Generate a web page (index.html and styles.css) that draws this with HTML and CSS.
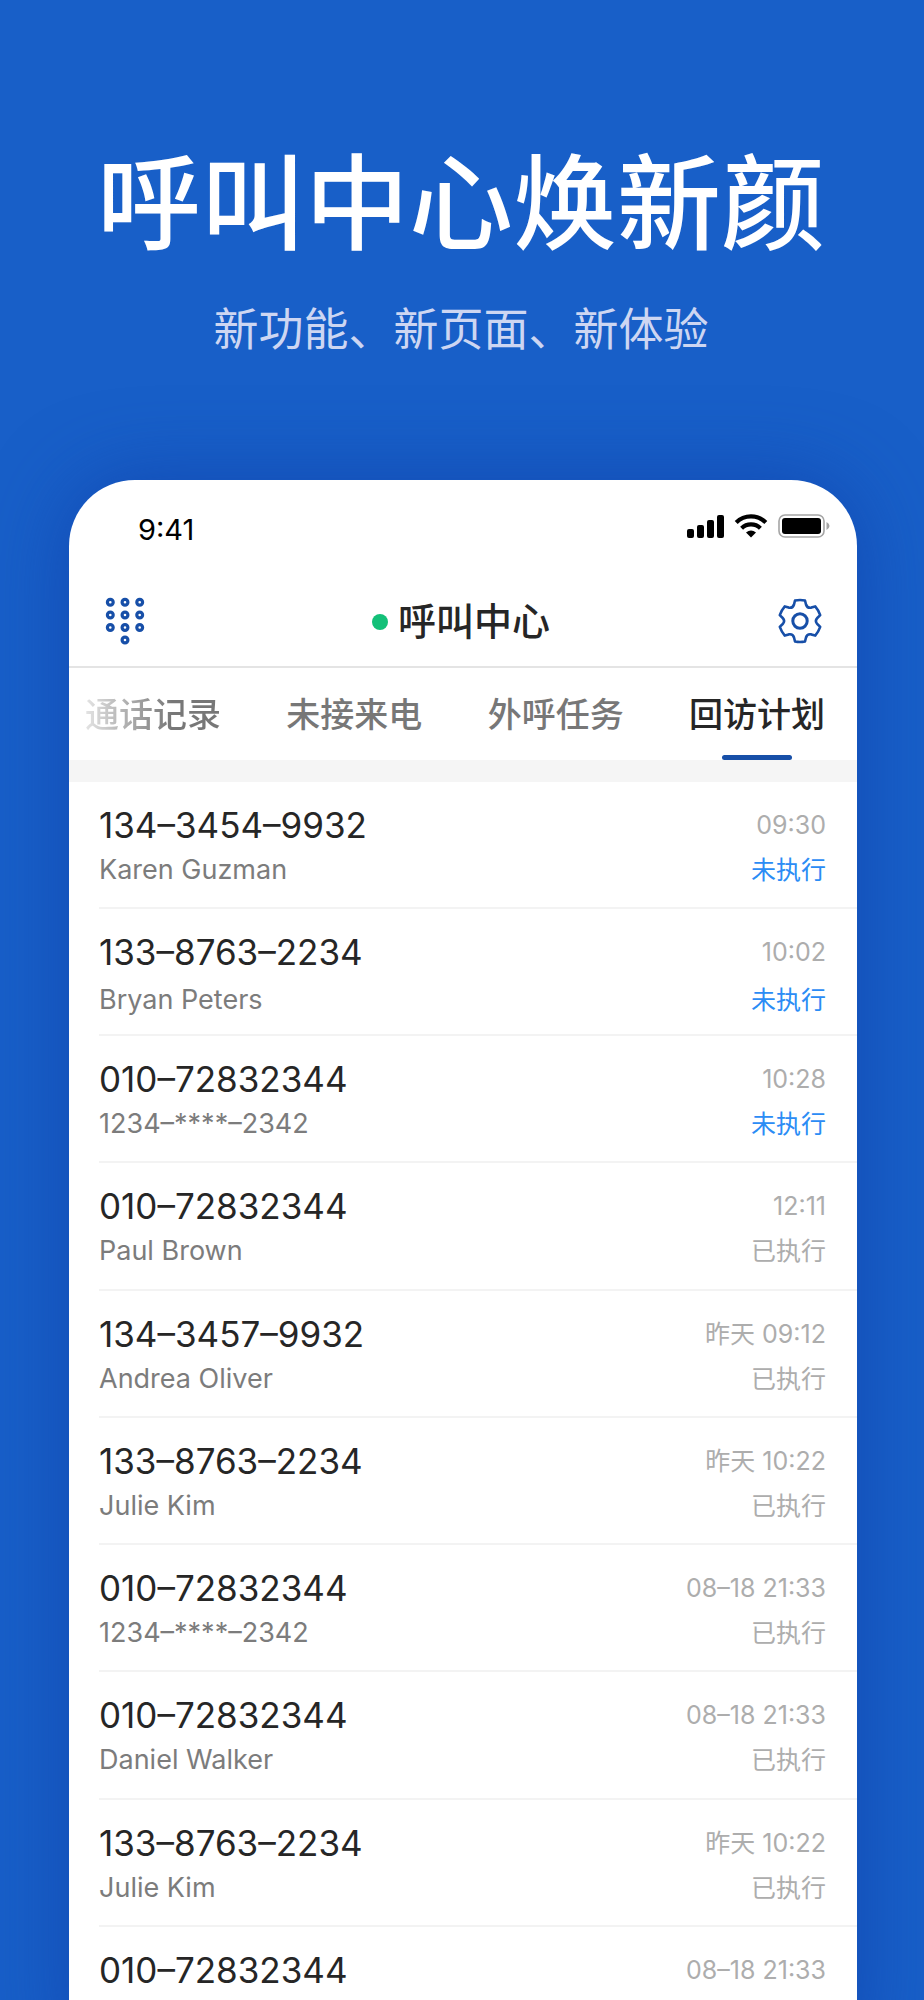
FILE: index.html
```html
<!DOCTYPE html>
<html lang="zh-CN">
<head>
<meta charset="utf-8">
<meta name="viewport" content="width=device-width, initial-scale=1">
<title>呼叫中心</title>
<link rel="stylesheet" href="styles.css">
</head>
<body>
<div class="page">
  <header class="hero">
    <h1 class="hero-title">呼叫中心焕新颜</h1>
    <p class="hero-subtitle">新功能、新页面、新体验</p>
  </header>

  <main class="phone">
    <div class="status-bar">
      <span class="clock">9:41</span>
      <span class="status-icons">
        <svg width="37" height="24" viewBox="0 0 37 24" aria-hidden="true">
          <rect x="0" y="15" width="7" height="9" rx="2"/><rect x="10" y="11" width="7" height="13" rx="2"/><rect x="20" y="6" width="7" height="18" rx="2"/><rect x="30" y="1" width="7" height="23" rx="2"/>
        </svg>
        <svg width="34" height="24" viewBox="0 0 34 24" aria-hidden="true">
          <g fill="none" stroke="#000" stroke-width="4.200"><path d="M2.200 8.500A21 21 0 0 1 31.800 8.500"/><path d="M7.600 14.300A13.400 13.400 0 0 1 26.400 14.300"/></g>
          <path d="M17 23.500L12 18.600Q17 14.600 22 18.600Z"/>
        </svg>
        <svg width="52" height="24" viewBox="0 0 52 24" aria-hidden="true">
          <rect x="1" y="1" width="45" height="22" rx="6" fill="none" stroke="#a5a5a5" stroke-width="1.600"/>
          <rect x="4" y="4" width="39" height="16" rx="3"/><path d="M48.500 8Q51.500 9.500 51.500 12T48.500 16Z" fill="#a5a5a5"/>
        </svg>
      </span>
    </div>

    <div class="nav-bar">
      <button class="icon-button" type="button" aria-label="拨号盘">
        <svg width="40" height="48" viewBox="0 0 40 48" fill="none" stroke="#174fa8" stroke-width="3.200" aria-hidden="true">
          <circle cx="5.300" cy="5.300" r="2.900"/><circle cx="20" cy="5.300" r="2.900"/><circle cx="34.700" cy="5.300" r="2.900"/>
          <circle cx="5.300" cy="18" r="2.900"/><circle cx="20" cy="18" r="2.900"/><circle cx="34.700" cy="18" r="2.900"/>
          <circle cx="5.300" cy="30.500" r="2.900"/><circle cx="20" cy="30.500" r="2.900"/><circle cx="34.700" cy="30.500" r="2.900"/>
          <circle cx="20" cy="43" r="2.900"/>
        </svg>
      </button>
      <h2 class="nav-title"><span class="online-dot"></span>呼叫中心</h2>
      <button class="icon-button" type="button" aria-label="设置">
        <svg width="46" height="46" viewBox="-23 -23 46 46" fill="none" stroke="#174fa8" stroke-width="2.600" stroke-linejoin="round" aria-hidden="true">
          <path d="M-5-20.500Q0-21.500 5-20.500L6-16.500Q7.200-12.600 11.300-13.400L15.200-14.600Q18.500-10.800 20.200-5.900L17.300-3Q14.500 0 17.300 3L20.200 5.900Q18.500 10.800 15.200 14.600L11.300 13.400Q7.200 12.600 6 16.500L5 20.500Q0 21.500-5 20.500L-6 16.500Q-7.200 12.600-11.300 13.400L-15.200 14.600Q-18.500 10.800-20.200 5.900L-17.300 3Q-14.500 0-17.300-3L-20.200-5.900Q-18.500-10.800-15.200-14.600L-11.300-13.400Q-7.200-12.600-6-16.500Z"/>
          <circle r="7.200" stroke-width="3"/>
        </svg>
      </button>
    </div>

    <nav class="tabs">
      <button class="tab tab-fading" type="button">通话记录</button>
      <button class="tab" type="button">未接来电</button>
      <button class="tab" type="button">外呼任务</button>
      <button class="tab tab-active" type="button" aria-current="page">回访计划</button>
    </nav>

    <ul class="calls">
      <li class="call"><span class="number">134–3454–9932</span><time class="time">09:30</time><span class="name">Karen Guzman</span><span class="state state-pending">未执行</span></li>
      <li class="call call-loose"><span class="number">133–8763–2234</span><time class="time">10:02</time><span class="name">Bryan Peters</span><span class="state state-pending">未执行</span></li>
      <li class="call"><span class="number">010–72832344</span><time class="time">10:28</time><span class="name">1234–****–2342</span><span class="state state-pending">未执行</span></li>
      <li class="call"><span class="number">010–72832344</span><time class="time">12:11</time><span class="name">Paul Brown</span><span class="state">已执行</span></li>
      <li class="call"><span class="number">134–3457–9932</span><time class="time">昨天 09:12</time><span class="name">Andrea Oliver</span><span class="state">已执行</span></li>
      <li class="call"><span class="number">133–8763–2234</span><time class="time">昨天 10:22</time><span class="name">Julie Kim</span><span class="state">已执行</span></li>
      <li class="call"><span class="number">010–72832344</span><time class="time">08–18 21:33</time><span class="name">1234–****–2342</span><span class="state">已执行</span></li>
      <li class="call"><span class="number">010–72832344</span><time class="time">08–18 21:33</time><span class="name">Daniel Walker</span><span class="state">已执行</span></li>
      <li class="call"><span class="number">133–8763–2234</span><time class="time">昨天 10:22</time><span class="name">Julie Kim</span><span class="state">已执行</span></li>
      <li class="call"><span class="number">010–72832344</span><time class="time">08–18 21:33</time></li>
    </ul>
  </main>
</div>
</body>
</html>
```

FILE: styles.css
```css
* {
  box-sizing: border-box;
}

body {
  margin: 0;
  background: #185fc8;
  font-family: Inter, "Noto Sans CJK SC", sans-serif;
}

button {
  padding: 0;
  border: 0;
  background: none;
  font: inherit;
  color: inherit;
}

.page {
  display: flex;
  flex-direction: column;
  height: 100vh;
  overflow: hidden;
}

.hero {
  flex: none;
  padding: 137px 2px 0 0;
  height: 480px;
  text-align: center;
}

.hero-title {
  margin: 0;
  font-family: "Noto Sans CJK SC", sans-serif;
  font-size: 104px;
  font-weight: 500;
  line-height: 120px;
  color: #fff;
}

.hero-subtitle {
  margin: 38px 0 0;
  font-family: "Noto Sans CJK SC", sans-serif;
  font-size: 45px;
  font-weight: 400;
  line-height: 64px;
  color: #cdd6f2;
}

.phone {
  flex: 1 0 auto;
  margin: 0 67px 0 69px;
  border-radius: 66px 66px 0 0;
  background: #fff;
  box-shadow: 0 0 80px rgba(16, 64, 168, 0.7);
}

.status-bar {
  display: flex;
  align-items: center;
  justify-content: space-between;
  height: 96px;
  padding: 0 27px 0 69px;
}

.clock {
  padding-top: 4px;
  font-size: 29px;
  line-height: 36px;
  color: #000;
}

.status-icons {
  display: flex;
  gap: 10px;
  padding-bottom: 4px;
}

.nav-bar {
  display: flex;
  align-items: center;
  justify-content: space-between;
  height: 92px;
  padding: 0 34px 0 36px;
  border-bottom: 2px solid #e4e4e4;
}

.icon-button {
  display: flex;
}

.nav-title {
  display: flex;
  align-items: center;
  gap: 10px;
  margin: 0;
  font-size: 38px;
  font-weight: 500;
  line-height: 48px;
  color: #262626;
}

.online-dot {
  width: 16px;
  height: 16px;
  margin-top: 2px;
  border-radius: 50%;
  background: #13c078;
}

.tabs {
  display: flex;
  justify-content: space-between;
  height: 114px;
  padding: 0 32px 0 16px;
  border-bottom: 22px solid #f5f5f5;
}

.tab {
  display: flex;
  align-items: center;
  padding-top: 2px;
  font-size: 34px;
  font-weight: 500;
  line-height: 40px;
  color: #777;
}

.tab-fading {
  background: linear-gradient(90deg, #e4e4e4, #777 64%);
  background-clip: text;
  -webkit-background-clip: text;
  color: transparent;
}

.tab-active {
  position: relative;
  color: #262626;
}

.tab-active::after {
  content: "";
  position: absolute;
  bottom: 0;
  left: 50%;
  width: 70px;
  height: 5px;
  margin-left: -35px;
  border-radius: 3px;
  background: #174fa8;
}

.calls {
  margin: 0;
  padding: 0 0 0 30px;
  list-style: none;
}

.call {
  display: grid;
  grid-template-columns: 1fr auto;
  grid-auto-rows: 45px;
  align-items: center;
  height: 127px;
  padding: 20px 31px 0 0;
  border-bottom: 2px solid #f3f3f3;
  line-height: 36px;
}

.call:nth-child(4n) {
  height: 128px;
}

.call-loose {
  row-gap: 3px;
}

.number {
  font-size: 35px;
  color: #262626;
}

.name {
  font-size: 27px;
  color: #7c7c7c;
}

.time,
.state {
  font-size: 25px;
  text-align: right;
  color: #adadad;
}

.state-pending {
  color: #2b8cf5;
}
```
